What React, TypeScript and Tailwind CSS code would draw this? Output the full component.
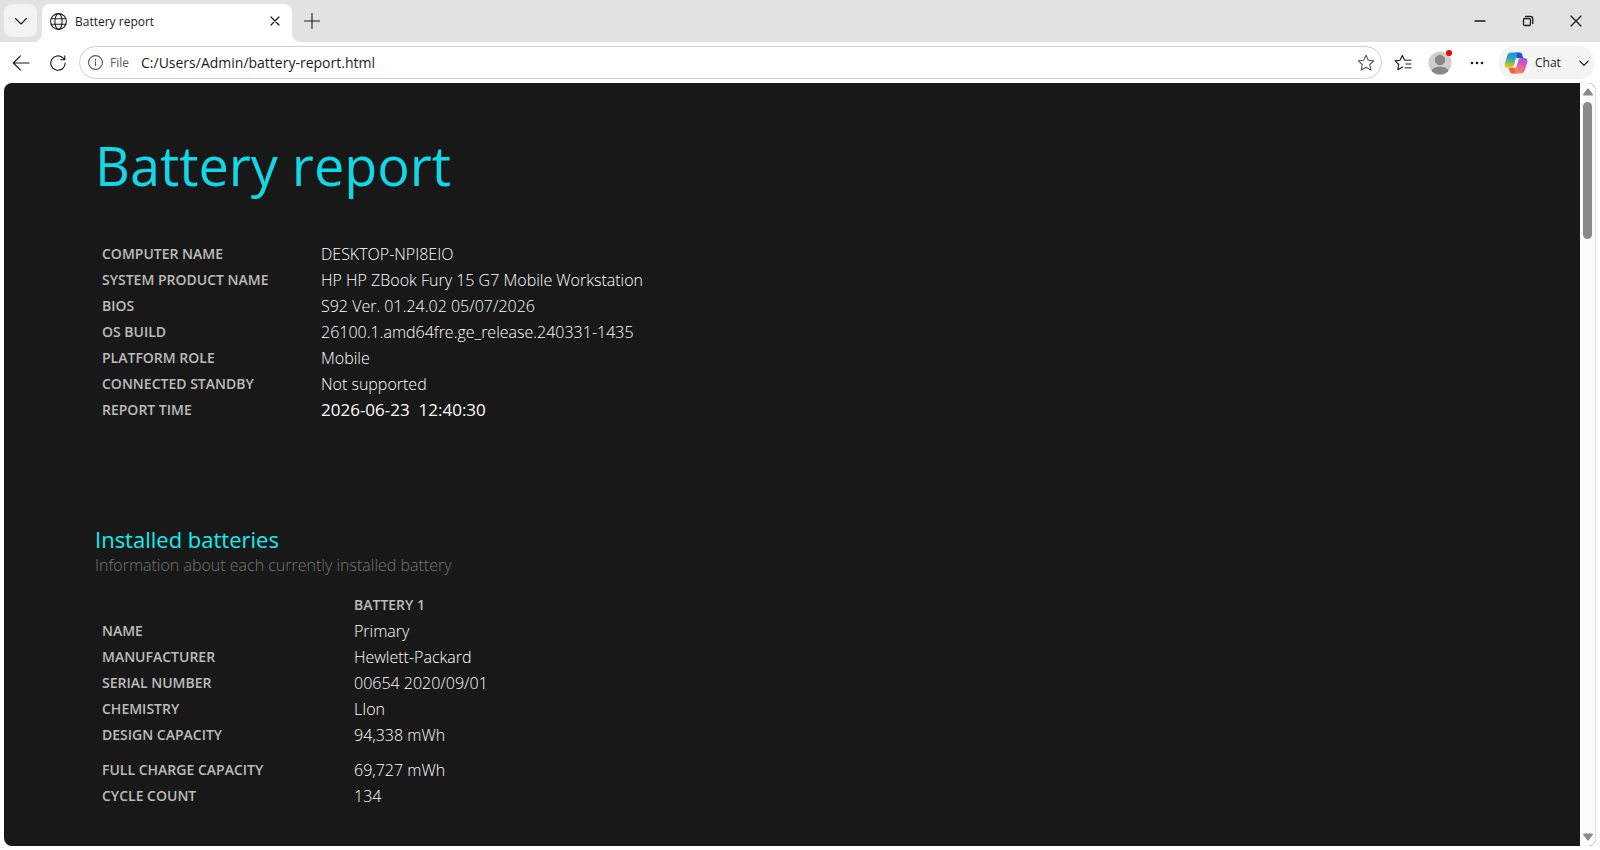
import type { ReactNode } from 'react'

const systemInfo = [
  { label: 'COMPUTER NAME', value: 'DESKTOP-NPI8EIO' },
  { label: 'SYSTEM PRODUCT NAME', value: 'HP HP ZBook Fury 15 G7 Mobile Workstation' },
  { label: 'BIOS', value: 'S92 Ver. 01.24.02 05/07/2026' },
  { label: 'OS BUILD', value: '26100.1.amd64fre.ge_release.240331-1435' },
  { label: 'PLATFORM ROLE', value: 'Mobile' },
  { label: 'CONNECTED STANDBY', value: 'Not supported' },
]

const batteryInfo = [
  { label: 'NAME', value: 'Primary' },
  { label: 'MANUFACTURER', value: 'Hewlett-Packard' },
  { label: 'SERIAL NUMBER', value: '00654 2020/09/01' },
  { label: 'CHEMISTRY', value: 'LIon' },
  { label: 'DESIGN CAPACITY', value: '94,338 mWh' },
]

const capacityInfo = [
  { label: 'FULL CHARGE CAPACITY', value: '69,727 mWh' },
  { label: 'CYCLE COUNT', value: '134' },
]

export default function App() {
  return (
    <div className="flex min-h-screen flex-col bg-white font-['Open_Sans','Noto_Sans',sans-serif] text-[#1b1b1b]">
      <TabStrip />
      <Toolbar />
      <div className="mx-1 mb-1 flex flex-1 overflow-hidden rounded-lg bg-[#181818]">
        <Report />
        <Scrollbar />
      </div>
    </div>
  )
}

function TabStrip() {
  return (
    <header className="flex h-[42px] items-start bg-[#e2e2e2] pt-1 pl-1">
      <button type="button" aria-label="Tab actions" className="grid size-[33px] place-items-center rounded-lg bg-[#f3f3f3]">
        <Icon size={14}>
          <path d="M1.5 4.5 7 10l5.5-5.5" />
        </Icon>
      </button>
      <div className="relative ml-[5px] flex h-[38px] w-[250px] items-center rounded-t-lg bg-white pr-3 pb-1 pl-2">
        <TabFlare className="absolute bottom-0 -left-2" d="M8 0v8H0A8 8 0 0 0 8 0Z" />
        <TabFlare className="absolute -right-2 bottom-0" d="M0 0v8h8A8 8 0 0 1 0 0Z" />
        <Icon size={17}>
          <circle cx="8.5" cy="8.5" r="7.9" />
          <ellipse cx="8.5" cy="8.5" rx="3.6" ry="7.9" />
          <path d="M1.2 5.7h14.6M1.2 11.3h14.6" />
        </Icon>
        <span className="ml-2 flex-1 pt-0.5 text-xs">Battery report</span>
        <button type="button" aria-label="Close tab">
          <Icon size={10}>
            <path d="m1 1 8 8M9 1 1 9" strokeWidth="1.2" />
          </Icon>
        </button>
      </div>
      <button type="button" aria-label="New tab" className="ml-3 grid h-[33px] w-4 place-items-center">
        <Icon size={16}>
          <path d="M8 .5v15M.5 8h15" />
        </Icon>
      </button>
      <div className="ml-auto flex h-[33px]">
        <button type="button" aria-label="Minimize" className="grid w-12 place-items-center">
          <Icon size={12}>
            <path d="M1 6h10" strokeWidth="1.4" />
          </Icon>
        </button>
        <button type="button" aria-label="Restore" className="grid w-12 place-items-center">
          <Icon size={12}>
            <rect x="1.5" y="3.5" width="7" height="7" rx="1.2" strokeWidth="1.3" />
            <path d="M3.5 1.3h4.7a2.6 2.6 0 0 1 2.6 2.6v4.5" strokeWidth="1.3" />
          </Icon>
        </button>
        <button type="button" aria-label="Close" className="grid w-12 place-items-center">
          <Icon size={12}>
            <path d="m1 1 10 10M11 1 1 11" strokeWidth="1.3" />
          </Icon>
        </button>
      </div>
    </header>
  )
}

function Toolbar() {
  return (
    <nav className="flex h-[41px] items-center pr-[5px] pl-3">
      <button type="button" aria-label="Back" className="mr-5">
        <Icon size={18}>
          <path d="M17 9H1.500M8.500 1.800 1.300 9l7.200 7.200" />
        </Icon>
      </button>
      <button type="button" aria-label="Refresh" className="mr-[13px]">
        <Icon size={16}>
          <path d="M15.2 8A7.2 7.2 0 1 1 13 2.900l1.800 1.800M14.800.8v4h-4" />
        </Icon>
      </button>
      <div className="flex h-[33px] flex-1 items-center rounded-full border border-[#cfcfcf] pr-[6px] pl-2">
        <Icon size={15} className="text-[#555]">
          <circle cx="7.5" cy="7.5" r="6.9" />
          <path d="M7.5 6.8v4M7.5 4v1.2" />
        </Icon>
        <label htmlFor="address" className="ml-[7px] text-xs text-[#5a5a5a]">
          File
        </label>
        <input
          id="address"
          type="text"
          defaultValue="C:/Users/Admin/battery-report.html"
          className="ml-3 min-w-0 flex-1 bg-transparent text-sm outline-none"
        />
        <button type="button" aria-label="Add to favorites">
          <Icon size={18} className="text-[#555]">
            <path d="m9 1.2 2.3 5 5.4.6-4 3.7 1.1 5.4L9 13.2l-4.8 2.7 1.1-5.4-4-3.7 5.4-.6Z" />
          </Icon>
        </button>
      </div>
      <button type="button" aria-label="Favorites" className="ml-3">
        <Icon size={18}>
          <path d="M10.600 6.200 8.300 1.500 6 6.200l-5 .7 3.700 3.600-.9 5.200 4.900-2.600" />
          <path d="M11 6.200h6M12 10h5M11 13.800h6" stroke="#666" strokeWidth="1.4" />
        </Icon>
      </button>
      <button type="button" aria-label="Profile" className="relative ml-4">
        <svg width="24" height="24" viewBox="0 0 24 24">
          <clipPath id="avatar">
            <circle cx="12" cy="12" r="11.5" />
          </clipPath>
          <g clipPath="url(#avatar)">
            <path d="M0 0h24v24H0z" fill="#d0cecc" />
            <circle cx="12" cy="9" r="5.2" fill="#8a8886" />
            <ellipse cx="12" cy="21" rx="8.8" ry="5.5" fill="#8a8886" />
          </g>
        </svg>
        <span className="absolute -top-px right-0 size-[6px] rounded-full bg-[#e8000b]" />
      </button>
      <button type="button" aria-label="Settings and more" className="ml-[18px]">
        <svg width="14" height="4" viewBox="0 0 14 4" fill="currentColor">
          <circle cx="2" cy="2" r="1.3" />
          <circle cx="7" cy="2" r="1.3" />
          <circle cx="12" cy="2" r="1.3" />
        </svg>
      </button>
      <button type="button" className="ml-[14px] flex h-[33px] items-center rounded-full bg-[#f4f4f4] pr-[6px] pl-[6px]">
        <CopilotLogo />
        <span className="ml-[7px] w-11 text-left text-xs">Chat</span>
        <Icon size={10}>
          <path d="M.8 3 5 7.3 9.2 3" />
        </Icon>
      </button>
    </nav>
  )
}

function Report() {
  return (
    <main className="flex-1 pt-10 pb-9 pl-[91px] text-base font-light text-white">
      <h1 className="text-[54px] leading-[84px] font-normal text-[#11d8e8]">Battery report</h1>

      <table className="mt-[34px]">
        <tbody>
          {systemInfo.map((row) => (
            <Row key={row.label} label={row.label} labelWidth="w-[226px]">
              {row.value}
            </Row>
          ))}
          <Row label="REPORT TIME" labelWidth="w-[226px]">
            <span className="text-[17px] font-normal whitespace-pre">2026-06-23  12:40:30</span>
          </Row>
        </tbody>
      </table>

      <h2 className="mt-[102px] text-[22px] leading-7 font-normal text-[#11eef4]">Installed batteries</h2>
      <p className="mt-0.5 leading-5 text-[#777]">Information about each currently installed battery</p>

      <table className="mt-[17px]">
        <thead>
          <tr className="h-[26px]">
            <td />
            <th scope="col" className="text-left text-sm font-semibold text-[#bcbcbc]">
              BATTERY 1
            </th>
          </tr>
        </thead>
        <tbody>
          {batteryInfo.map((row) => (
            <Row key={row.label} label={row.label} labelWidth="w-[259px]">
              {row.value}
            </Row>
          ))}
        </tbody>
        <tbody>
          <tr className="h-[9px]">
            <td colSpan={2} />
          </tr>
          {capacityInfo.map((row) => (
            <Row key={row.label} label={row.label} labelWidth="w-[259px]">
              {row.value}
            </Row>
          ))}
        </tbody>
      </table>
    </main>
  )
}

function Row({ label, labelWidth, children }: { label: string; labelWidth: string; children: ReactNode }) {
  return (
    <tr className="h-[26px]">
      <th scope="row" className={`${labelWidth} pl-[7px] text-left text-sm font-semibold text-[#bcbcbc]`}>
        {label}
      </th>
      <td className="leading-6">{children}</td>
    </tr>
  )
}

function Scrollbar() {
  return (
    <div className="flex w-4 flex-col items-center border-r border-[#e0e0e0] bg-[#fcfcfc] py-[5px]">
      <svg width="10" height="8" viewBox="0 0 10 8" fill="#8a8a8a">
        <path d="M4.3.8a1 1 0 0 1 1.4 0L9.7 6a1 1 0 0 1-.8 1.600H1.100A1 1 0 0 1 .3 6Z" />
      </svg>
      <div className="mt-1.5 h-[137px] w-[9px] rounded-full bg-[#8a8a8a]" />
      <svg className="mt-auto" width="10" height="8" viewBox="0 0 10 8" fill="#8a8a8a">
        <path d="M4.3 7.2a1 1 0 0 0 1.4 0L9.7 2A1 1 0 0 0 8.9.4H1.100A1 1 0 0 0 .3 2Z" />
      </svg>
    </div>
  )
}

function Icon({ size, className = '', children }: { size: number; className?: string; children: ReactNode }) {
  return (
    <svg
      width={size}
      height={size}
      viewBox={`0 0 ${size} ${size}`}
      fill="none"
      stroke="currentColor"
      strokeWidth="1.1"
      strokeLinecap="round"
      strokeLinejoin="round"
      className={`shrink-0 ${className}`}
    >
      {children}
    </svg>
  )
}

// Curved foot that joins the active tab to the toolbar
function TabFlare({ className, d }: { className: string; d: string }) {
  return (
    <svg width="8" height="8" viewBox="0 0 8 8" fill="#fff" className={className}>
      <path d={d} />
    </svg>
  )
}

function CopilotLogo() {
  return (
    <svg width="24" height="22" viewBox="0 0 24 22">
      <defs>
        <linearGradient id="cool" x1=".6" y1="0" x2=".4" y2="1">
          <stop offset="0" stopColor="#1a93e6" />
          <stop offset=".4" stopColor="#2ba5c4" />
          <stop offset=".7" stopColor="#8cbf4a" />
          <stop offset="1" stopColor="#f2c81c" />
        </linearGradient>
        <linearGradient id="warm" x1=".7" y1="0" x2=".3" y2="1">
          <stop offset="0" stopColor="#a653ea" />
          <stop offset=".5" stopColor="#ea5c9c" />
          <stop offset="1" stopColor="#fb8657" />
        </linearGradient>
      </defs>
      <path d="M11 .5h4.600c1.500 0 2.300.9 2.700 2.200l1.100 3.500h-6.800Z" fill="#1c55cc" />
      <path d="M13 21.500H8.400c-1.500 0-2.300-.9-2.700-2.200l-1.100-3.500h6.800Z" fill="#ef5f3c" />
      <path d="M7.500.5h7.300c-1.200.3-1.700 1.200-2.100 2.600L10 12.800c-.6 2-1.700 3.200-3.800 3.200H4C1.200 16 .1 14 .8 11.500L3.200 3.700C3.900 1.600 5.300.5 7.500.5Z" fill="url(#cool)" />
      <path d="M16.500 21.500H9.200c1.200-.3 1.700-1.200 2.100-2.600L14 9.200c.6-2 1.700-3.200 3.800-3.200H20c2.800 0 3.900 2 3.200 4.500l-2.400 7.800c-.7 2.100-2.100 3.200-4.300 3.200Z" fill="url(#warm)" />
    </svg>
  )
}
